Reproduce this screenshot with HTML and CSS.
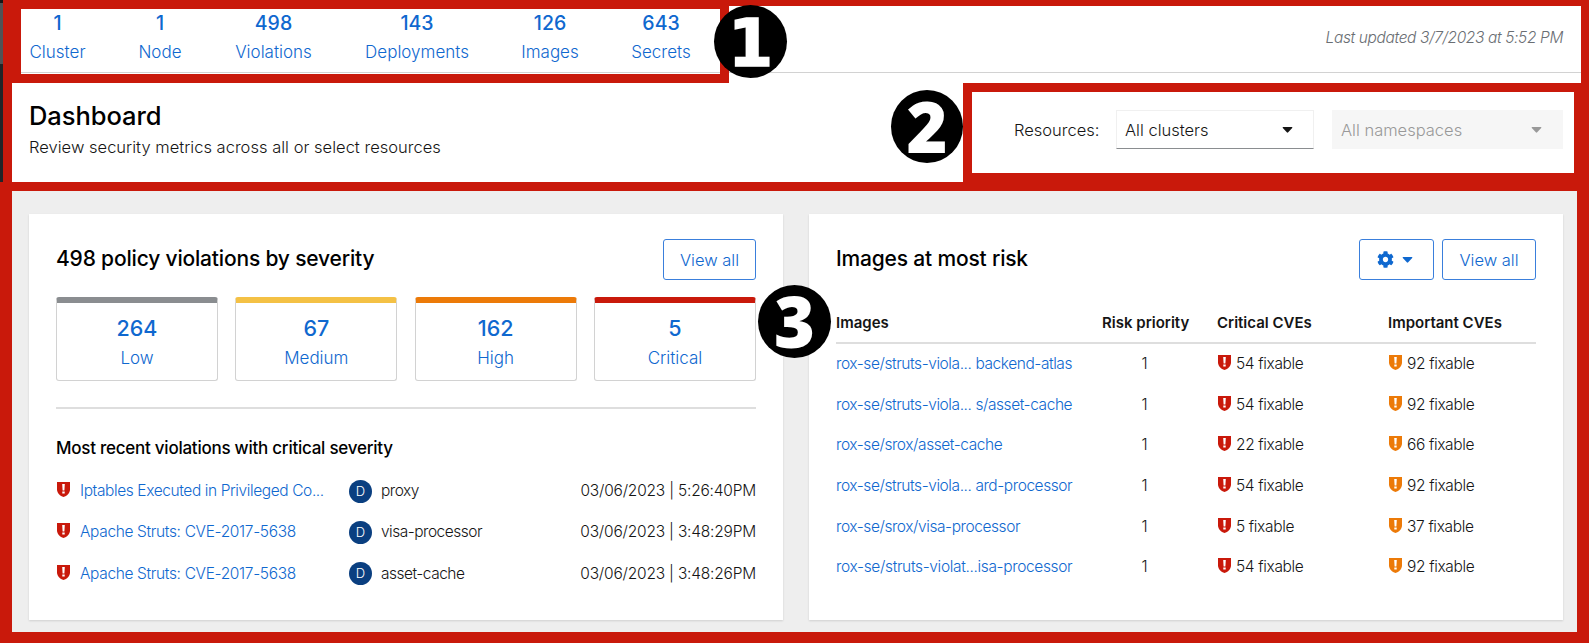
FILE: index.html
```html
<!DOCTYPE html>
<html lang="en">
<head>
<meta charset="utf-8">
<title>Dashboard</title>
<link rel="stylesheet" href="styles.css">
</head>
<body>
<svg width="0" height="0" class="defs">
  <symbol id="shield" viewBox="0 0 13 15"><path fill="currentColor" d="M0 0H13V7.2C13 11.2 9.8 13.9 6.5 15C3.2 13.9 0 11.2 0 7.2Z"/><path fill="#fff" d="M5.2 2H7.8L7.4 8.400H5.6ZM5.3 9.4H7.7V11.600H5.3Z"/></symbol>
  <symbol id="caret" viewBox="0 0 10 6"><path fill="currentColor" d="M.6 0H9.4Q10.300 .3 9.700 1L5.700 5.300Q5 6 4.300 5.300L.3 1Q-.3 .3 .6 0Z"/></symbol>
  <symbol id="gear" viewBox="0 0 512 512"><path fill="currentColor" d="M487.4 315.700l-42.600-24.600c4.300-23.200 4.300-47 0-70.200l42.600-24.600c4.900-2.800 7.100-8.600 5.500-14-11.100-35.600-30-67.800-54.700-94.600-3.800-4.100-10-5.100-14.800-2.300L380.800 110c-17.900-15.400-38.500-27.300-60.800-35.100V25.800c0-5.600-3.900-10.500-9.400-11.700-36.700-8.200-74.300-7.800-109.200 0-5.500 1.200-9.400 6.100-9.400 11.700V75c-22.200 7.900-42.800 19.800-60.800 35.100L88.700 85.500c-4.900-2.800-11-1.900-14.800 2.300-24.700 26.700-43.600 58.900-54.700 94.600-1.700 5.400.6 11.200 5.500 14L67.300 221c-4.300 23.200-4.300 47 0 70.200l-42.600 24.600c-4.900 2.800-7.100 8.600-5.500 14 11.100 35.600 30 67.800 54.700 94.600 3.800 4.100 10 5.100 14.800 2.300l42.600-24.600c17.900 15.400 38.500 27.300 60.800 35.100v49.200c0 5.600 3.900 10.500 9.400 11.700 36.700 8.200 74.300 7.800 109.200 0 5.500-1.200 9.400-6.100 9.400-11.700v-49.200c22.200-7.900 42.800-19.800 60.800-35.100l42.600 24.600c4.900 2.800 11 1.900 14.800-2.300 24.700-26.700 43.600-58.900 54.700-94.600 1.500-5.500-.7-11.300-5.600-14.100zM256 336c-44.100 0-80-35.900-80-80s35.900-80 80-80 80 35.900 80 80-35.900 80-80 80z"/></symbol>
</svg>
<div class="page">
  <header class="summary">
    <nav class="stats">
      <a class="stat w-cluster"><b>1</b><span>Cluster</span></a>
      <a class="stat w-node"><b>1</b><span>Node</span></a>
      <a class="stat w-violations"><b>498</b><span>Violations</span></a>
      <a class="stat w-deployments"><b>143</b><span>Deployments</span></a>
      <a class="stat w-images"><b>126</b><span>Images</span></a>
      <a class="stat w-secrets"><b>643</b><span>Secrets</span></a>
    </nav>
    <em class="updated">Last updated 3/7/2023 at 5:52 PM</em>
  </header>
  <section class="titlebar">
    <div class="heading">
      <h1>Dashboard</h1>
      <p>Review security metrics across all or select resources</p>
    </div>
    <div class="filters">
      <span class="filter-label">Resources:</span>
      <div class="select clusters"><span>All clusters</span><svg class="caret"><use href="#caret"/></svg></div>
      <div class="select namespaces"><span>All namespaces</span><svg class="caret"><use href="#caret"/></svg></div>
    </div>
  </section>
  <main class="widgets">
    <section class="card">
      <div class="card-head"><h2>498 policy violations by severity</h2><a class="btn">View all</a></div>
      <div class="tiles">
        <a class="tile low"><b>264</b><span>Low</span></a>
        <a class="tile medium"><b>67</b><span>Medium</span></a>
        <a class="tile high"><b>162</b><span>High</span></a>
        <a class="tile critical"><b>5</b><span>Critical</span></a>
      </div>
      <hr>
      <h3>Most recent violations with critical severity</h3>
      <div class="recent">
        <div class="event"><svg class="shield red"><use href="#shield"/></svg><a>Iptables Executed in Privileged Co...</a><i>D</i><span>proxy</span><time>03/06/2023 | 5:26:40PM</time></div>
        <div class="event"><svg class="shield red"><use href="#shield"/></svg><a class="wide">Apache Struts: CVE-2017-5638</a><i>D</i><span>visa-processor</span><time>03/06/2023 | 3:48:29PM</time></div>
        <div class="event"><svg class="shield red"><use href="#shield"/></svg><a class="wide">Apache Struts: CVE-2017-5638</a><i>D</i><span>asset-cache</span><time>03/06/2023 | 3:48:26PM</time></div>
      </div>
    </section>
    <section class="card">
      <div class="card-head"><h2>Images at most risk</h2><div class="actions"><a class="btn options"><svg class="gear"><use href="#gear"/></svg><svg class="caret"><use href="#caret"/></svg></a><a class="btn">View all</a></div></div>
      <div class="table">
        <div class="row head"><span>Images</span><span class="risk">Risk priority</span><span>Critical CVEs</span><span>Important CVEs</span></div>
        <div class="row"><a>rox-se/struts-viola... backend-atlas</a><span class="risk">1</span><span class="cve"><svg class="shield red"><use href="#shield"/></svg>54 fixable</span><span class="cve"><svg class="shield orange"><use href="#shield"/></svg>92 fixable</span></div>
        <div class="row"><a>rox-se/struts-viola... s/asset-cache</a><span class="risk">1</span><span class="cve"><svg class="shield red"><use href="#shield"/></svg>54 fixable</span><span class="cve"><svg class="shield orange"><use href="#shield"/></svg>92 fixable</span></div>
        <div class="row"><a>rox-se/srox/asset-cache</a><span class="risk">1</span><span class="cve"><svg class="shield red"><use href="#shield"/></svg>22 fixable</span><span class="cve"><svg class="shield orange"><use href="#shield"/></svg>66 fixable</span></div>
        <div class="row"><a>rox-se/struts-viola... ard-processor</a><span class="risk">1</span><span class="cve"><svg class="shield red"><use href="#shield"/></svg>54 fixable</span><span class="cve"><svg class="shield orange"><use href="#shield"/></svg>92 fixable</span></div>
        <div class="row"><a>rox-se/srox/visa-processor</a><span class="risk">1</span><span class="cve"><svg class="shield red"><use href="#shield"/></svg>5 fixable</span><span class="cve"><svg class="shield orange"><use href="#shield"/></svg>37 fixable</span></div>
        <div class="row"><a class="wide">rox-se/struts-violat...isa-processor</a><span class="risk">1</span><span class="cve"><svg class="shield red"><use href="#shield"/></svg>54 fixable</span><span class="cve"><svg class="shield orange"><use href="#shield"/></svg>92 fixable</span></div>
      </div>
    </section>
  </main>
  <div class="callout frame"></div>
  <div class="callout box-one"></div>
  <div class="callout box-two"></div>
  <div class="callout box-three"></div>
  <div class="marker one">1</div>
  <div class="marker two">2</div>
  <div class="marker three">3</div>
</div>
</body>
</html>
```

FILE: styles.css
```css
* { box-sizing: border-box; }
body { margin: 0; background: #fff; color: #151515; font-family: Inter, "Liberation Sans", sans-serif; font-size: 16px; font-weight: 300; }
h1, h2, h3, p { margin: 0; }
a { color: #0f68cf; text-decoration: none; white-space: nowrap; }
span, time, em, h1, h2, h3, p { white-space: nowrap; }
.defs { position: absolute; }
.page { position: relative; width: 1589px; height: 643px; overflow: hidden; display: flex; flex-direction: column; padding-left: 3px; background: linear-gradient(#151515 3px, #4f5255 3px, #4f5255 64px, #212427 64px) 0 0 / 3px 100% no-repeat, #fff; }

.summary { height: 73px; flex: none; display: flex; justify-content: space-between; padding: 9px 26px 0 27px; border-bottom: 1px solid #d2d2d2; }
.stats { display: flex; gap: 53px; }
.stat { display: flex; flex-direction: column; align-items: center; font-size: 17px; line-height: 28px; }
.stat b { font-size: 19.500px; font-weight: 500; line-height: 29px; }
.w-cluster { width: 55px; }
.w-node { width: 44px; }
.w-violations { width: 77px; }
.w-deployments { width: 104px; }
.w-images { width: 56px; }
.w-secrets { width: 60px; }
.updated { line-height: 58px; color: #6a6e73; font-size: 15.500px; letter-spacing: -0.37px; }

.titlebar { height: 118px; flex: none; display: flex; justify-content: space-between; padding: 26px 26px 0 26px; }
h1 { font-size: 25.500px; font-weight: 500; line-height: 34px; letter-spacing: -0.05px; color: #000; }
.heading p { font-size: 16.500px; line-height: 28px; letter-spacing: 0.02px; }
.filters { display: flex; align-items: center; height: 39px; margin-top: 11px; font-size: 16.500px; }
.filter-label { width: 102px; }
.select { display: flex; align-items: center; justify-content: space-between; height: 39px; padding: 0 21px 0 9px; }
.clusters { width: 198px; border: 1px solid #f0f0f0; border-bottom-color: #8a8d90; padding: 0 20px 0 8px; }
.namespaces { width: 231px; margin-left: 18px; background: #f6f6f6; color: #999; }
.caret { width: 11px; height: 6px; }

.widgets { flex: 1; display: flex; gap: 26px; padding: 23px 26px 23px 26px; background: #eee; }
.card { width: 754px; height: 406px; padding: 25px 27px 0; background: #fff; box-shadow: 0 1px 2px rgba(3,3,3,.13); }
.card-head { display: flex; justify-content: space-between; height: 41px; }
h2 { font-size: 21px; font-weight: 500; line-height: 39px; letter-spacing: -0.18px; color: #000; }
.actions { display: flex; gap: 8px; }
.btn { display: flex; align-items: center; justify-content: center; width: 94px; height: 41px; border: 1px solid #3a7fdc; border-radius: 3px; font-size: 16.500px; }
.card-head > .btn { width: 93px; }
.options { width: 75px; gap: 8px; padding-right: 4px; }
.gear { width: 17px; height: 17px; }

.tiles { display: flex; justify-content: space-between; margin-top: 17px; }
.tile { width: 162px; height: 84px; display: flex; flex-direction: column; align-items: center; border: 1px solid #d2d2d2; border-top: 6px solid; border-radius: 3px; padding-top: 10px; font-size: 17px; line-height: 30px; }
.tile b { font-size: 21.500px; font-weight: 500; line-height: 30px; }
.low { border-top-color: #8a8d90; }
.medium { border-top-color: #f4c145; }
.high { border-top-color: #ec7a08; }
.critical { border-top-color: #c9190b; }
hr { height: 2px; margin: 26px 0 0; border: 0; background: #dedede; }
h3 { margin-top: 24px; font-size: 17px; font-weight: 500; line-height: 30px; letter-spacing: -0.25px; color: #000; }
.recent { padding-top: 7px; }
.event { display: grid; grid-template-columns: 24px 269px 32px 1fr auto; align-items: center; height: 41.300px; font-size: 15.500px; letter-spacing: -0.4px; }
.event span { letter-spacing: -0.5px; }
.event time { letter-spacing: -0.2px; }
.event i { width: 23px; height: 23px; margin-top: 1px; border-radius: 50%; background: #0a3f80; color: #fff; font-style: normal; font-size: 13px; letter-spacing: 0; line-height: 23px; text-align: center; }
.shield { width: 13px; height: 15px; margin: -2px 0 0 1px; flex: none; }
.red { color: #c9190b; }
.orange { color: #ec7a08; }

.table { padding-top: 21px; }
.row { display: grid; grid-template-columns: 266px 115px 171px 1fr; align-items: center; height: 40.600px; font-size: 15.500px; letter-spacing: -0.35px; }
.row a { letter-spacing: -0.43px; }
.event .wide, .row .wide { letter-spacing: -0.35px; }
.head { height: 43px; padding-top: 1px; border-bottom: 2px solid #dedede; font-size: 15px; font-weight: 600; letter-spacing: 0; }
.row:not(.head) > * { margin-top: -1px; }
.risk { width: 85px; text-align: center; }
.cve { display: flex; align-items: center; gap: 5px; }

/* Annotation frames and numbered markers above the dashboard */
.callout { position: absolute; border: 9px solid #c9190b; }
.frame { left: 3px; top: 0; width: 1586px; height: 191px; border-width: 6px 8px 9px 9px; }
.box-one { left: 12px; top: 0; width: 717px; height: 83px; }
.box-two { left: 963px; top: 83px; width: 626px; height: 99px; border-right-width: 15px; }
.box-three { left: 0; top: 182px; width: 1589px; height: 461px; border-width: 9px 12px 11px 12px; }
.marker { position: absolute; width: 73px; height: 73px; border-radius: 50%; background: #000; color: #fff; text-align: center; font: 800 70px/72px "Open Sans", sans-serif; }
.one { left: 714px; top: 5px; font-family: "DejaVu Sans"; font-size: 65px; line-height: 77px; -webkit-text-stroke: 1.500px #fff; }
.two { left: 891px; top: 90px; width: 72px; }
.three { left: 758px; top: 285px; }
```
